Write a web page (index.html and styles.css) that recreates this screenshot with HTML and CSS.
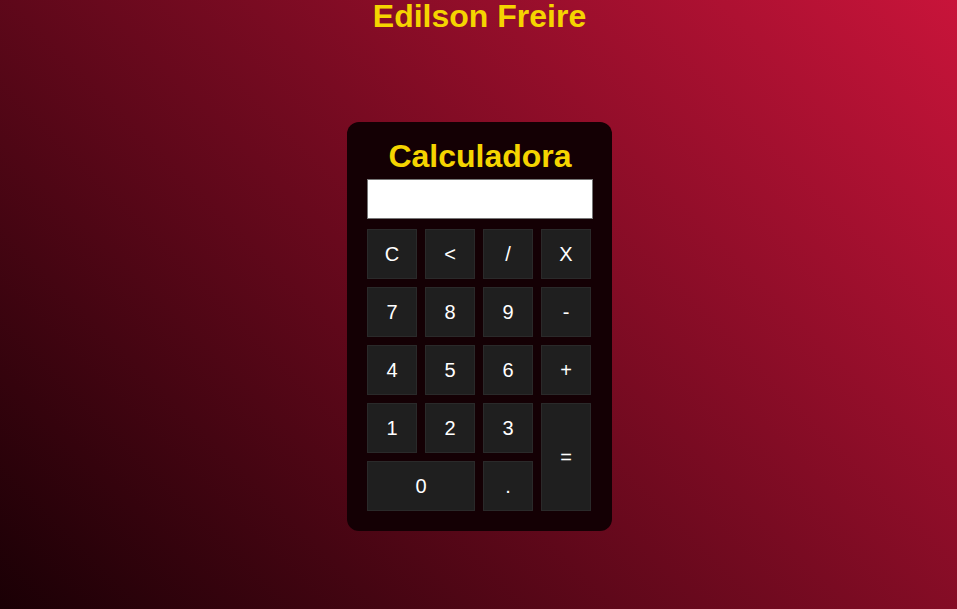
FILE: index.html
```html
<!DOCTYPE html>
<html lang="pt">
<head>
<meta charset="utf-8">
<title>Calculadora</title>
<link rel="stylesheet" href="styles.css">
</head>
<body>
<h1 class="author">Edilson Freire</h1>
<div class="calc">
  <h2 class="calc-title">Calculadora</h2>
  <input class="display" type="text" readonly>
  <div class="keys">
    <button class="key">C</button>
    <button class="key">&lt;</button>
    <button class="key">/</button>
    <button class="key">X</button>
    <button class="key">7</button>
    <button class="key">8</button>
    <button class="key">9</button>
    <button class="key">-</button>
    <button class="key">4</button>
    <button class="key">5</button>
    <button class="key">6</button>
    <button class="key">+</button>
    <button class="key">1</button>
    <button class="key">2</button>
    <button class="key">3</button>
    <button class="key key-eq">=</button>
    <button class="key key-zero">0</button>
    <button class="key">.</button>
  </div>
</div>
</body>
</html>
```
FILE: styles.css
```css
html, body {
  margin: 0;
  height: 100%;
}
body {
  box-sizing: border-box;
  padding-left: 2px;
  background: linear-gradient(45deg, #1a0005 0%, #c8143a 100%);
  font-family: "Liberation Sans", Arial, sans-serif;
  display: flex;
  flex-direction: column;
  align-items: center;
  overflow: hidden;
}
.author {
  margin: 0;
  font-size: 32px;
  line-height: 32px;
  font-weight: bold;
  color: #f5d400;
  text-align: center;
}
.calc {
  margin-top: 90px;
  background: #140004;
  border-radius: 12px;
  padding: 18px 19px 20px 20px;
  width: 226px;
  display: flex;
  flex-direction: column;
}
.calc-title {
  margin: 0 0 7px;
  font-size: 32px;
  line-height: 32px;
  font-weight: bold;
  color: #f5d400;
  text-align: center;
}
.display {
  box-sizing: border-box;
  width: 226px;
  height: 40px;
  margin: 0 0 10px;
  border: 1px solid #767676;
  background: #fff;
  padding: 0 6px;
  font-size: 20px;
  font-family: "Liberation Sans", Arial, sans-serif;
}
.keys {
  display: grid;
  grid-template-columns: repeat(4, 50px);
  grid-auto-rows: 50px;
  gap: 8px;
}
.key {
  box-sizing: border-box;
  margin: 0;
  padding: 0;
  background: #1f1f1f;
  border: 1px solid #2a2a2a;
  color: #fff;
  font-family: "Liberation Sans", Arial, sans-serif;
  font-size: 20px;
}
.key-eq {
  grid-column: 4;
  grid-row: 4 / span 2;
}
.key-zero {
  grid-column: 1 / span 2;
}
```
